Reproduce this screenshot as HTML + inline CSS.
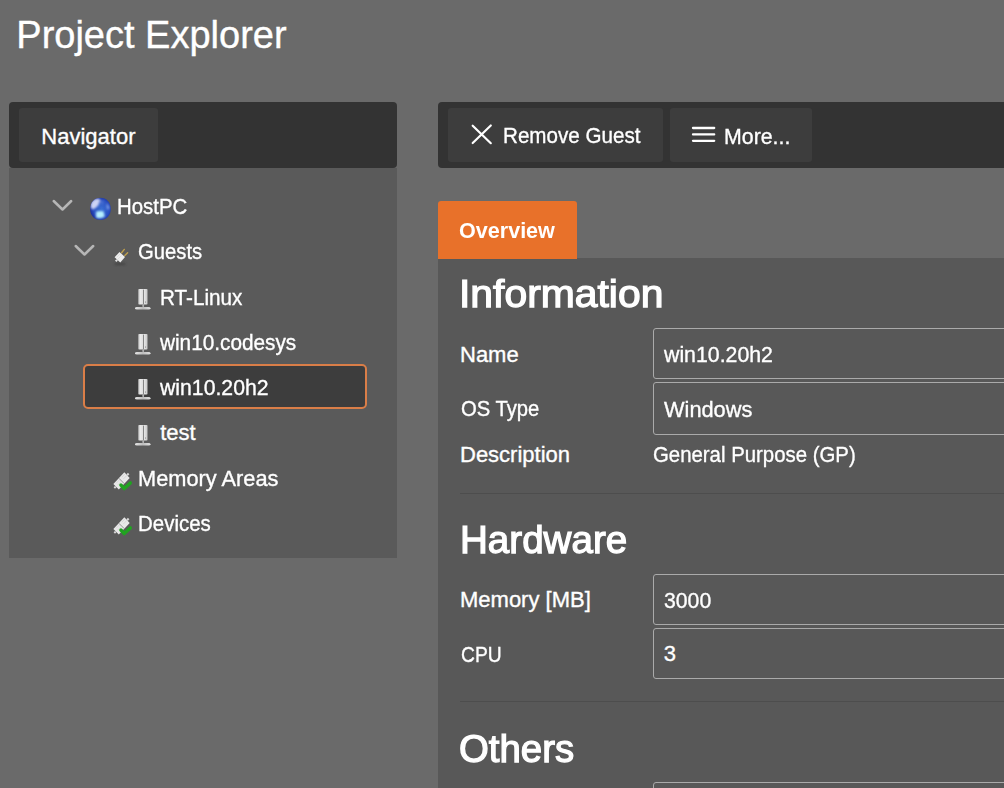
<!DOCTYPE html>
<html><head><meta charset="utf-8"><title>Project Explorer</title>
<style>
html,body{margin:0;padding:0;width:1004px;height:788px;overflow:hidden;background:#6a6a6a}
body{font-family:"Liberation Sans",sans-serif;color:#fff}
#wrap{position:relative;width:1004px;height:788px;overflow:hidden;background:#6a6a6a}
.t{position:absolute;white-space:pre;transform-origin:0 0;-webkit-text-stroke:0.35px #fff}
.bar{position:absolute;background:#333333;border-radius:4px}
.btn{position:absolute;background:#3d3d3d;border-radius:3px}
.i{position:absolute;overflow:visible}
.inp{position:absolute;left:653px;width:400px;border:1px solid #aaaaaa;border-radius:3px;box-sizing:content-box}
</style></head><body><div id="wrap">
<div class="t" style="left:16.30px;top:16.03px;font-size:38px;line-height:38px;font-weight:400;color:#fff;">Project Explorer</div>
<div class="bar" style="left:9px;top:102px;width:388px;height:66px"></div>
<div class="btn" style="left:19px;top:108px;width:139px;height:54px"></div>
<div class="t" style="left:41.30px;top:126.38px;font-size:22px;line-height:22px;font-weight:400;color:#fff;">Navigator</div>
<div style="position:absolute;left:9px;top:168px;width:388px;height:390px;background:#5a5a5a"></div>
<div style="position:absolute;left:83px;top:364px;width:280px;height:41px;border:2px solid #da7e48;border-radius:5px;background:#3d3d3d"></div>
<div class="t" style="left:117.15px;top:195.88px;font-size:22px;line-height:22px;font-weight:400;color:#fff;transform:scaleX(0.927);">HostPC</div>
<svg class="i" style="left:51px;top:198px" width="22" height="14" viewBox="0 0 22 14"><path d="M2.7 3 L11.5 11.5 L20.2 3" fill="none" stroke="#b6b6b6" stroke-width="2.5" stroke-linecap="round" stroke-linejoin="round"/></svg>
<svg class="i" style="left:84px;top:192px" width="32" height="32" viewBox="0 0 32 32"><defs><radialGradient id="gb" cx="0.55" cy="0.5" r="0.55"><stop offset="0" stop-color="#3a6fd4"/><stop offset="0.7" stop-color="#2a4fc0"/><stop offset="1" stop-color="#1d2f98"/></radialGradient><filter id="gbl" x="-50%" y="-50%" width="200%" height="200%"><feGaussianBlur stdDeviation="0.9"/></filter><clipPath id="gcl"><path d="M16.4 5.7 C22.5 5.7 26.8 10.5 26.8 17 C26.8 23.4 22.2 28 16.4 28 C10.6 28 6.1 23.4 6.1 17 C6.1 10.5 10.3 5.7 16.4 5.7 Z"/></clipPath></defs><path d="M16.4 5.7 C22.5 5.7 26.8 10.5 26.8 17 C26.8 23.4 22.2 28 16.4 28 C10.6 28 6.1 23.4 6.1 17 C6.1 10.5 10.3 5.7 16.4 5.7 Z" fill="url(#gb)"/><g clip-path="url(#gcl)" filter="url(#gbl)"><path d="M7 11 Q9.5 6.5 14 6.5 L16.5 8 Q15 10 14.5 13 Q12 16.5 8.5 17.5 L6.5 15 Z" fill="#cdd3f5"/><path d="M12 19.8 Q15 18.3 19.5 19.3 L20.8 24.5 Q16.5 27.5 12 25.5 Z" fill="#b5efff"/><path d="M22.5 11.5 Q25.5 13.5 25.3 17 L23 17.5 Z" fill="#8aaaf0" opacity="0.85"/><path d="M16 9 L20 8.5 L19 12.5 L16.5 12 Z" fill="#5a80dc" opacity="0.6"/></g></svg>
<div class="t" style="left:137.56px;top:241.17px;font-size:22px;line-height:22px;font-weight:400;color:#fff;transform:scaleX(0.92);">Guests</div>
<svg class="i" style="left:72.6px;top:243px" width="22" height="14" viewBox="0 0 22 14"><path d="M2.7 3 L11.5 11.5 L20.2 3" fill="none" stroke="#b6b6b6" stroke-width="2.5" stroke-linecap="round" stroke-linejoin="round"/></svg>
<svg class="i" style="left:106px;top:240px" width="30" height="30" viewBox="0 0 30 30"><defs><filter id="pbl" x="-50%" y="-50%" width="200%" height="200%"><feGaussianBlur stdDeviation="0.8"/></filter></defs><ellipse cx="14" cy="24" rx="6" ry="1.2" fill="#303030" opacity="0.55" filter="url(#pbl)"/><line x1="15.6" y1="12.8" x2="18.3" y2="9.4" stroke="#bf9f4c" stroke-width="1.4" stroke-linecap="round"/><line x1="18.8" y1="15.6" x2="21.6" y2="12.7" stroke="#bf9f4c" stroke-width="1.4" stroke-linecap="round"/><path d="M8.6 17.3 L13.5 12 L19 17.1 L14.3 22.6 Z" fill="#eeeeee"/><path d="M9 20.5 L10.6 19.2 L11.9 20.6 L10.4 22 Z" fill="#e4e4e4"/><path d="M10.5 17.5 L14 14 M12 19 L15.5 15.5" stroke="#cfcfcf" stroke-width="0.5"/></svg>
<div class="t" style="left:160.32px;top:287.06px;font-size:22px;line-height:22px;font-weight:400;color:#fff;transform:scaleX(0.94);">RT-Linux</div>
<svg class="i" style="left:128px;top:284px" width="30" height="30" viewBox="0 0 30 30"><defs><linearGradient id="sg" x1="0" x2="1"><stop offset="0" stop-color="#b0b0b0"/><stop offset="0.2" stop-color="#ececec"/><stop offset="0.5" stop-color="#dedede"/><stop offset="0.62" stop-color="#e8e8e8"/><stop offset="1" stop-color="#c8c8c8"/></linearGradient><linearGradient id="bg2" x1="0" x2="1"><stop offset="0" stop-color="#e6e6e6"/><stop offset="0.5" stop-color="#bcbcbc"/><stop offset="1" stop-color="#e0e0e0"/></linearGradient></defs><rect x="10.2" y="5" width="9.3" height="15.6" rx="0.8" fill="url(#sg)"/><rect x="15.05" y="5.6" width="0.9" height="14.6" fill="#7a7a7a"/><rect x="17.2" y="17.3" width="0.8" height="1.6" fill="#9a9a9a"/><path d="M14.2 20.6 H16.2 L15.9 23.3 H14.5 Z" fill="#b0b0b0"/><path d="M7 24.3 Q7 23.1 9 23.1 H20.5 Q22.5 23.1 22.5 24.3 Q22.5 25.5 20.5 25.5 H9 Q7 25.5 7 24.3 Z" fill="url(#bg2)"/></svg>
<div class="t" style="left:160.02px;top:331.75px;font-size:22px;line-height:22px;font-weight:400;color:#fff;transform:scaleX(0.944);">win10.codesys</div>
<svg class="i" style="left:128px;top:329px" width="30" height="30" viewBox="0 0 30 30"><defs><linearGradient id="sg" x1="0" x2="1"><stop offset="0" stop-color="#b0b0b0"/><stop offset="0.2" stop-color="#ececec"/><stop offset="0.5" stop-color="#dedede"/><stop offset="0.62" stop-color="#e8e8e8"/><stop offset="1" stop-color="#c8c8c8"/></linearGradient><linearGradient id="bg2" x1="0" x2="1"><stop offset="0" stop-color="#e6e6e6"/><stop offset="0.5" stop-color="#bcbcbc"/><stop offset="1" stop-color="#e0e0e0"/></linearGradient></defs><rect x="10.2" y="5" width="9.3" height="15.6" rx="0.8" fill="url(#sg)"/><rect x="15.05" y="5.6" width="0.9" height="14.6" fill="#7a7a7a"/><rect x="17.2" y="17.3" width="0.8" height="1.6" fill="#9a9a9a"/><path d="M14.2 20.6 H16.2 L15.9 23.3 H14.5 Z" fill="#b0b0b0"/><path d="M7 24.3 Q7 23.1 9 23.1 H20.5 Q22.5 23.1 22.5 24.3 Q22.5 25.5 20.5 25.5 H9 Q7 25.5 7 24.3 Z" fill="url(#bg2)"/></svg>
<div class="t" style="left:160.21px;top:377.04px;font-size:22px;line-height:22px;font-weight:400;color:#fff;transform:scaleX(0.965);">win10.20h2</div>
<svg class="i" style="left:128px;top:374px" width="30" height="30" viewBox="0 0 30 30"><defs><linearGradient id="sg" x1="0" x2="1"><stop offset="0" stop-color="#b0b0b0"/><stop offset="0.2" stop-color="#ececec"/><stop offset="0.5" stop-color="#dedede"/><stop offset="0.62" stop-color="#e8e8e8"/><stop offset="1" stop-color="#c8c8c8"/></linearGradient><linearGradient id="bg2" x1="0" x2="1"><stop offset="0" stop-color="#e6e6e6"/><stop offset="0.5" stop-color="#bcbcbc"/><stop offset="1" stop-color="#e0e0e0"/></linearGradient></defs><rect x="10.2" y="5" width="9.3" height="15.6" rx="0.8" fill="url(#sg)"/><rect x="15.05" y="5.6" width="0.9" height="14.6" fill="#7a7a7a"/><rect x="17.2" y="17.3" width="0.8" height="1.6" fill="#9a9a9a"/><path d="M14.2 20.6 H16.2 L15.9 23.3 H14.5 Z" fill="#b0b0b0"/><path d="M7 24.3 Q7 23.1 9 23.1 H20.5 Q22.5 23.1 22.5 24.3 Q22.5 25.5 20.5 25.5 H9 Q7 25.5 7 24.3 Z" fill="url(#bg2)"/></svg>
<div class="t" style="left:160.20px;top:422.33px;font-size:22px;line-height:22px;font-weight:400;color:#fff;">test</div>
<svg class="i" style="left:128px;top:420px" width="30" height="30" viewBox="0 0 30 30"><defs><linearGradient id="sg" x1="0" x2="1"><stop offset="0" stop-color="#b0b0b0"/><stop offset="0.2" stop-color="#ececec"/><stop offset="0.5" stop-color="#dedede"/><stop offset="0.62" stop-color="#e8e8e8"/><stop offset="1" stop-color="#c8c8c8"/></linearGradient><linearGradient id="bg2" x1="0" x2="1"><stop offset="0" stop-color="#e6e6e6"/><stop offset="0.5" stop-color="#bcbcbc"/><stop offset="1" stop-color="#e0e0e0"/></linearGradient></defs><rect x="10.2" y="5" width="9.3" height="15.6" rx="0.8" fill="url(#sg)"/><rect x="15.05" y="5.6" width="0.9" height="14.6" fill="#7a7a7a"/><rect x="17.2" y="17.3" width="0.8" height="1.6" fill="#9a9a9a"/><path d="M14.2 20.6 H16.2 L15.9 23.3 H14.5 Z" fill="#b0b0b0"/><path d="M7 24.3 Q7 23.1 9 23.1 H20.5 Q22.5 23.1 22.5 24.3 Q22.5 25.5 20.5 25.5 H9 Q7 25.5 7 24.3 Z" fill="url(#bg2)"/></svg>
<div class="t" style="left:138.32px;top:467.62px;font-size:22px;line-height:22px;font-weight:400;color:#fff;transform:scaleX(0.99);">Memory Areas</div>
<svg class="i" style="left:106px;top:466px" width="30" height="30" viewBox="0 0 30 30"><path d="M7.4 17.9 L18.3 6.3 L23.7 11.9 L12.8 23.5 Z" fill="#e9e9e9"/><path d="M20.3 8.4 L21.9 6.8 L23.4 8.3 L21.8 9.9 Z" fill="#d8d8d8"/><path d="M7.6 21.3 L9 19.9 L10.4 21.3 L9 22.7 Z" fill="#dcdcdc"/><line x1="12.9" y1="12.3" x2="18.2" y2="17.6" stroke="#8a8a8a" stroke-width="0.9"/><path d="M10 17.5 L13.6 13.7 M11.6 19.2 L15.2 15.4 M15.8 11.3 L19.2 7.7 M17.4 13 L20.8 9.4" stroke="#cdcdcd" stroke-width="0.6"/><path d="M14.9 19 L18.2 22.6 L24.3 16.9" fill="none" stroke="#20a320" stroke-width="3.4" stroke-linecap="round" stroke-linejoin="round"/></svg>
<div class="t" style="left:137.54px;top:512.91px;font-size:22px;line-height:22px;font-weight:400;color:#fff;transform:scaleX(0.93);">Devices</div>
<svg class="i" style="left:106px;top:511px" width="30" height="30" viewBox="0 0 30 30"><path d="M7.4 17.9 L18.3 6.3 L23.7 11.9 L12.8 23.5 Z" fill="#e9e9e9"/><path d="M20.3 8.4 L21.9 6.8 L23.4 8.3 L21.8 9.9 Z" fill="#d8d8d8"/><path d="M7.6 21.3 L9 19.9 L10.4 21.3 L9 22.7 Z" fill="#dcdcdc"/><line x1="12.9" y1="12.3" x2="18.2" y2="17.6" stroke="#8a8a8a" stroke-width="0.9"/><path d="M10 17.5 L13.6 13.7 M11.6 19.2 L15.2 15.4 M15.8 11.3 L19.2 7.7 M17.4 13 L20.8 9.4" stroke="#cdcdcd" stroke-width="0.6"/><path d="M14.9 19 L18.2 22.6 L24.3 16.9" fill="none" stroke="#20a320" stroke-width="3.4" stroke-linecap="round" stroke-linejoin="round"/></svg>
<div class="bar" style="left:438px;top:102px;width:600px;height:66px"></div>
<div class="btn" style="left:448px;top:108px;width:215px;height:54px"></div>
<div class="btn" style="left:670px;top:108px;width:142px;height:54px"></div>
<svg class="i" style="left:468px;top:121px" width="28" height="28" viewBox="0 0 28 28"><path d="M4.7 4.7 L22.8 22.2 M22.8 4.5 L4.7 22" stroke="#fff" stroke-width="2.2" stroke-linecap="round"/></svg>
<svg class="i" style="left:688px;top:120px" width="32" height="26" viewBox="0 0 32 26"><path d="M5 8 H26.2 M5 14.4 H26.2 M5 20.8 H26.2" stroke="#fff" stroke-width="2.3" stroke-linecap="round"/></svg>
<div class="t" style="left:502.93px;top:125.38px;font-size:22px;line-height:22px;font-weight:400;color:#fff;transform:scaleX(0.937);">Remove Guest</div>
<div class="t" style="left:723.76px;top:125.58px;font-size:22px;line-height:22px;font-weight:400;color:#fff;transform:scaleX(0.97);">More...</div>
<div style="position:absolute;left:438px;top:258px;width:600px;height:600px;background:#585858"></div>
<div style="position:absolute;left:438px;top:201px;width:139px;height:58px;background:#e8712a;border-radius:3px 3px 0 0"></div>
<div class="t" style="left:459.12px;top:219.88px;font-size:22px;line-height:22px;font-weight:700;color:#fff;transform:scaleX(0.98);-webkit-text-stroke:0;">Overview</div>
<div class="t" style="left:458.81px;top:275.03px;font-size:38px;line-height:38px;font-weight:400;color:#fff;transform:scaleX(1.075);-webkit-text-stroke:1.25px #fff;">Information</div>
<div class="t" style="left:460.00px;top:343.98px;font-size:22px;line-height:22px;font-weight:400;color:#fff;">Name</div>
<div class="inp" style="top:328px;height:49px"></div>
<div class="t" style="left:663.91px;top:343.98px;font-size:22px;line-height:22px;font-weight:400;color:#fff;transform:scaleX(0.968);">win10.20h2</div>
<div class="t" style="left:461.08px;top:398.18px;font-size:22px;line-height:22px;font-weight:400;color:#fff;transform:scaleX(0.92);">OS Type</div>
<div class="inp" style="top:382px;height:51px"></div>
<div class="t" style="left:663.90px;top:398.68px;font-size:22px;line-height:22px;font-weight:400;color:#fff;transform:scaleX(0.99);">Windows</div>
<div class="t" style="left:460.00px;top:444.18px;font-size:22px;line-height:22px;font-weight:400;color:#fff;">Description</div>
<div class="t" style="left:652.97px;top:443.68px;font-size:22px;line-height:22px;font-weight:400;color:#fff;transform:scaleX(0.926);">General Purpose (GP)</div>
<div style="position:absolute;left:460px;top:493px;width:600px;height:1px;background:#4d4d4d"></div>
<div class="t" style="left:460.17px;top:521.03px;font-size:38px;line-height:38px;font-weight:400;color:#fff;transform:scaleX(1.015);-webkit-text-stroke:1.25px #fff;">Hardware</div>
<div class="t" style="left:460.00px;top:589.38px;font-size:22px;line-height:22px;font-weight:400;color:#fff;">Memory [MB]</div>
<div class="inp" style="top:574px;height:49px"></div>
<div class="t" style="left:663.84px;top:589.78px;font-size:22px;line-height:22px;font-weight:400;color:#fff;transform:scaleX(0.964);">3000</div>
<div class="t" style="left:460.73px;top:643.68px;font-size:22px;line-height:22px;font-weight:400;color:#fff;transform:scaleX(0.875);">CPU</div>
<div class="inp" style="top:628px;height:49px"></div>
<div class="t" style="left:663.80px;top:643.38px;font-size:22px;line-height:22px;font-weight:400;color:#fff;">3</div>
<div style="position:absolute;left:460px;top:701px;width:600px;height:1px;background:#4d4d4d"></div>
<div class="t" style="left:459.29px;top:729.63px;font-size:38px;line-height:38px;font-weight:400;color:#fff;transform:scaleX(1.01);-webkit-text-stroke:1.25px #fff;">Others</div>
<div class="inp" style="top:782px;height:49px"></div>
</div></body></html>
